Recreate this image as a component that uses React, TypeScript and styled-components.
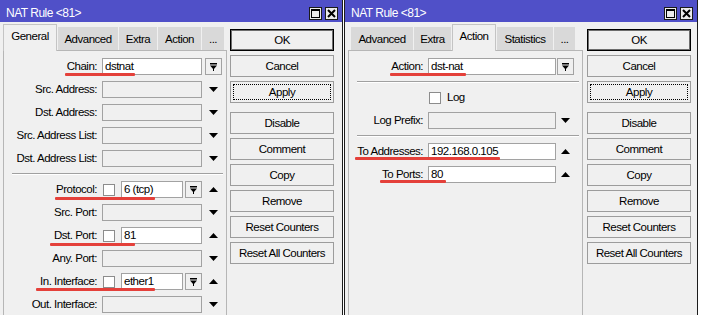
import React from 'react';
import styled, { createGlobalStyle } from 'styled-components';

const GlobalStyle = createGlobalStyle`
    html, body {
        margin: 0;
        padding: 0;
        background: #ffffff;
    }
    body {
        font-family: "Liberation Sans", Arial, sans-serif;
        font-size: 11.5px;
        line-height: 15px;
        letter-spacing: -0.5px;
        color: #000;
    }
`;

const Screen = styled.div`
    display: flex;
    gap: 1px;
    width: 701px;
    height: 315px;
    overflow: hidden;
`;

const Window = styled.div<{ $width: number; $leftBorder?: boolean }>`
    flex: none;
    width: ${p => p.$width}px;
    height: 330px;
    box-sizing: border-box;
    display: flex;
    flex-direction: column;
    background: #f0f0f0;
    border-right: 1px solid #1c1c1c;
    border-left: ${p => (p.$leftBorder ? '1px solid #1c1c1c' : 'none')};
`;

const TitleBar = styled.div`
    height: 22px;
    box-sizing: border-box;
    padding: 5px 4px 0 6px;
    display: flex;
    align-items: center;
    background: #5050c8;
    color: #fff;
    font-size: 12px;
`;

const TitleText = styled.span`
    flex: 1;
`;

const TitleButtons = styled.div`
    display: flex;
    gap: 3px;
`;

const TitleButton = styled.div`
    width: 13px;
    height: 13px;
    box-sizing: border-box;
    border: 1px solid #1a1a1a;
    background: #ececec;
    display: flex;
    align-items: center;
    justify-content: center;
`;

const Body = styled.div<{ $gap: number }>`
    flex: 1;
    display: flex;
    gap: ${p => p.$gap}px;
    padding-left: 3px;
`;

const Main = styled.div<{ $width: number }>`
    width: ${p => p.$width}px;
    display: flex;
    flex-direction: column;
`;

const TabStrip = styled.div<{ $offset: number }>`
    height: 28px;
    display: flex;
    align-items: flex-end;
    gap: 1px;
    padding-left: ${p => p.$offset}px;
`;

const Tab = styled.div<{ $active?: boolean; $width: number }>`
    position: relative;
    z-index: 1;
    width: ${p => p.$width}px;
    height: ${p => (p.$active ? 27 : 23)}px;
    margin-bottom: ${p => (p.$active ? -1 : 0)}px;
    box-sizing: border-box;
    padding-top: ${p => (p.$active ? 4 : 5)}px;
    text-align: center;
    white-space: nowrap;
    background: ${p => (p.$active ? '#f0f0f0' : '#d9d9d9')};
    border: ${p => (p.$active ? '1px solid #c4c4c4' : 'none')};
    border-bottom: none;
`;

const Panel = styled.div`
    flex: 1;
    box-sizing: border-box;
    border: 1px solid #b6b6b6;
    background: #f0f0f0;
    padding-top: 7px;
    display: flex;
    flex-direction: column;
    gap: 6px;
`;

const Row = styled.div<{ $cols: string }>`
    position: relative;
    height: 17px;
    display: grid;
    grid-template-columns: ${p => p.$cols};
    column-gap: 1px;
    align-items: center;
`;

const Label = styled.div`
    text-align: right;
    padding-right: 4px;
    white-space: nowrap;
`;

const Field = styled.div`
    height: 17px;
    display: flex;
    align-items: center;
`;

const Input = styled.div<{ $filled?: boolean }>`
    flex: 1;
    height: 17px;
    box-sizing: border-box;
    padding-left: 2px;
    display: flex;
    align-items: center;
    white-space: nowrap;
    overflow: hidden;
    border: 1px solid #a2a2a2;
    background: ${p => (p.$filled ? '#ffffff' : '#f0f0f0')};
`;

const DropButton = styled.div<{ $gap?: number }>`
    flex: none;
    width: 17px;
    height: 17px;
    margin-left: ${p => p.$gap ?? 0}px;
    box-sizing: border-box;
    border: 1px solid #a2a2a2;
    background: #f0f0f0;
    display: flex;
    align-items: center;
    justify-content: center;
`;

const Check = styled.div`
    flex: none;
    width: 12px;
    height: 12px;
    box-sizing: border-box;
    margin: 0 6px 0 1px;
    border: 1px solid #8c8c8c;
    background: #ffffff;
`;

const Trail = styled.div`
    height: 17px;
    display: flex;
    align-items: center;
    justify-content: center;
`;

const Separator = styled.div`
    height: 0;
    margin: 0 3px 0 8px;
    border-top: 1px solid #a0a0a0;
    border-bottom: 1px solid #ffffff;
`;

const Mark = styled.div<{ $left: number; $width: number; $top?: number }>`
    position: absolute;
    z-index: 2;
    left: ${p => p.$left}px;
    top: ${p => p.$top ?? 15}px;
    width: ${p => p.$width}px;
    height: 3px;
    border-radius: 1px;
    background: #e4403a;
`;

const Buttons = styled.div`
    flex: none;
    width: 104px;
    padding-top: 7px;
    display: flex;
    flex-direction: column;
    gap: 4px;
`;

const Button = styled.div<{ $default?: boolean; $focused?: boolean; $spaced?: boolean }>`
    position: relative;
    height: 22px;
    box-sizing: border-box;
    margin-top: ${p => (p.$spaced ? 5 : 0)}px;
    display: flex;
    align-items: center;
    justify-content: center;
    white-space: nowrap;
    background: #f0f0f0;
    border: 1px solid ${p => (p.$default ? '#000' : '#9c9c9c')};
    box-shadow: ${p => (p.$default ? 'inset 0 0 0 1px #6e6e6e' : 'none')};

    &::after {
        content: '';
        display: ${p => (p.$focused ? 'block' : 'none')};
        position: absolute;
        inset: 2px;
        border: 1px dotted #000;
    }
`;

const MaxIcon = () => (
    <svg width="9" height="9" viewBox="0 0 9 9">
        <rect x="0.5" y="0.5" width="8" height="8" fill="none" stroke="#000" />
        <rect x="0" y="0" width="9" height="2" fill="#000" />
    </svg>
);

const CloseIcon = () => (
    <svg width="9" height="9" viewBox="0 0 9 9">
        <path d="M1 1 L8 8 M8 1 L1 8" stroke="#000" strokeWidth="2" />
    </svg>
);

const ComboIcon = () => (
    <svg width="9" height="10" viewBox="0 0 9 10">
        <rect x="1" y="1" width="7" height="1.5" fill="#000" />
        <path d="M1 3.5 H8 L4.5 7.5 Z" fill="#000" />
        <rect x="4" y="7" width="1" height="2" fill="#000" />
    </svg>
);

const Arrow = ({ up }: { up?: boolean }) => (
    <svg width="9" height="5" viewBox="0 0 9 5">
        <path d={up ? 'M0 5 H9 L4.5 0 Z' : 'M0 0 H9 L4.5 5 Z'} fill="#000" />
    </svg>
);

const actionButtons = [
    'OK', 'Cancel', 'Apply', 'Disable', 'Comment', 'Copy', 'Remove', 'Reset Counters', 'Reset All Counters',
];

const ButtonColumn: React.FC = () => (
    <Buttons>
        {actionButtons.map(name => (
            <Button
                key={name}
                $default={name === 'OK'}
                $focused={name === 'Apply'}
                $spaced={name === 'Disable'}
            >
                {name}
            </Button>
        ))}
    </Buttons>
);

const Title: React.FC = () => (
    <TitleBar>
        <TitleText>NAT Rule &lt;81&gt;</TitleText>
        <TitleButtons>
            <TitleButton><MaxIcon /></TitleButton>
            <TitleButton><CloseIcon /></TitleButton>
        </TitleButtons>
    </TitleBar>
);

const leftTabs = [
    { name: 'General', width: 54, active: true },
    { name: 'Advanced', width: 60 },
    { name: 'Extra', width: 38 },
    { name: 'Action', width: 43 },
    { name: '...', width: 22 },
];

const rightTabs = [
    { name: 'Advanced', width: 62 },
    { name: 'Extra', width: 37 },
    { name: 'Action', width: 44, active: true },
    { name: 'Statistics', width: 56 },
    { name: '...', width: 21 },
];

const LEFT_COLS = '97px 100px 20px';
const RIGHT_COLS = '78px 128px 16px';

const emptyLeft = ['Src. Address:', 'Dst. Address:', 'Src. Address List:', 'Dst. Address List:'];

const GeneralPanel: React.FC = () => (
    <Panel>
        <Row $cols={LEFT_COLS}>
            <Label>Chain:</Label>
            <Field><Input $filled>dstnat</Input></Field>
            <Trail><DropButton><ComboIcon /></DropButton></Trail>
            <Mark $left={61} $width={70} />
        </Row>
        {emptyLeft.map(label => (
            <Row key={label} $cols={LEFT_COLS}>
                <Label>{label}</Label>
                <Field><Input /></Field>
                <Trail><Arrow /></Trail>
            </Row>
        ))}
        <Separator />
        <Row $cols={LEFT_COLS}>
            <Label>Protocol:</Label>
            <Field>
                <Check />
                <Input $filled>6 (tcp)</Input>
                <DropButton $gap={2}><ComboIcon /></DropButton>
            </Field>
            <Trail><Arrow up /></Trail>
            <Mark $left={51} $width={100} $top={16} />
        </Row>
        <Row $cols={LEFT_COLS}>
            <Label>Src. Port:</Label>
            <Field><Input /></Field>
            <Trail><Arrow /></Trail>
        </Row>
        <Row $cols={LEFT_COLS}>
            <Label>Dst. Port:</Label>
            <Field>
                <Check />
                <Input $filled>81</Input>
            </Field>
            <Trail><Arrow up /></Trail>
            <Mark $left={46} $width={85} $top={16} />
        </Row>
        <Row $cols={LEFT_COLS}>
            <Label>Any. Port:</Label>
            <Field><Input /></Field>
            <Trail><Arrow /></Trail>
        </Row>
        <Row $cols={LEFT_COLS}>
            <Label>In. Interface:</Label>
            <Field>
                <Check />
                <Input $filled>ether1</Input>
                <DropButton $gap={2}><ComboIcon /></DropButton>
            </Field>
            <Trail><Arrow up /></Trail>
            <Mark $left={32} $width={119} />
        </Row>
        <Row $cols={LEFT_COLS}>
            <Label>Out. Interface:</Label>
            <Field><Input /></Field>
            <Trail><Arrow /></Trail>
        </Row>
    </Panel>
);

const ActionPanel: React.FC = () => (
    <Panel>
        <Row $cols={RIGHT_COLS}>
            <Label>Action:</Label>
            <Field><Input $filled>dst-nat</Input></Field>
            <Trail><DropButton><ComboIcon /></DropButton></Trail>
            <Mark $left={41} $width={76} />
        </Row>
        <Separator />
        <Row $cols={RIGHT_COLS}>
            <Label />
            <Field>
                <Check />
                <span>Log</span>
            </Field>
        </Row>
        <Row $cols={RIGHT_COLS}>
            <Label>Log Prefix:</Label>
            <Field><Input /></Field>
            <Trail><Arrow /></Trail>
        </Row>
        <Separator />
        <Row $cols={RIGHT_COLS}>
            <Label>To Addresses:</Label>
            <Field><Input $filled>192.168.0.105</Input></Field>
            <Trail><Arrow up /></Trail>
            <Mark $left={6} $width={145} $top={14} />
        </Row>
        <Row $cols={RIGHT_COLS}>
            <Label>To Ports:</Label>
            <Field><Input $filled>80</Input></Field>
            <Trail><Arrow up /></Trail>
            <Mark $left={31} $width={66} $top={14} />
        </Row>
    </Panel>
);

const App: React.FC = () => {
    return (
        <>
            <GlobalStyle />
            <Screen>
                <Window $width={343}>
                    <Title />
                    <Body $gap={3}>
                        <Main $width={224}>
                            <TabStrip $offset={0}>
                                {leftTabs.map(tab => (
                                    <Tab key={tab.name} $width={tab.width} $active={tab.active}>{tab.name}</Tab>
                                ))}
                            </TabStrip>
                            <GeneralPanel />
                        </Main>
                        <ButtonColumn />
                    </Body>
                </Window>
                <Window $width={354} $leftBorder>
                    <Title />
                    <Body $gap={4}>
                        <Main $width={235}>
                            <TabStrip $offset={3}>
                                {rightTabs.map(tab => (
                                    <Tab key={tab.name} $width={tab.width} $active={tab.active}>{tab.name}</Tab>
                                ))}
                            </TabStrip>
                            <ActionPanel />
                        </Main>
                        <ButtonColumn />
                    </Body>
                </Window>
            </Screen>
        </>
    );
};

export default App;
